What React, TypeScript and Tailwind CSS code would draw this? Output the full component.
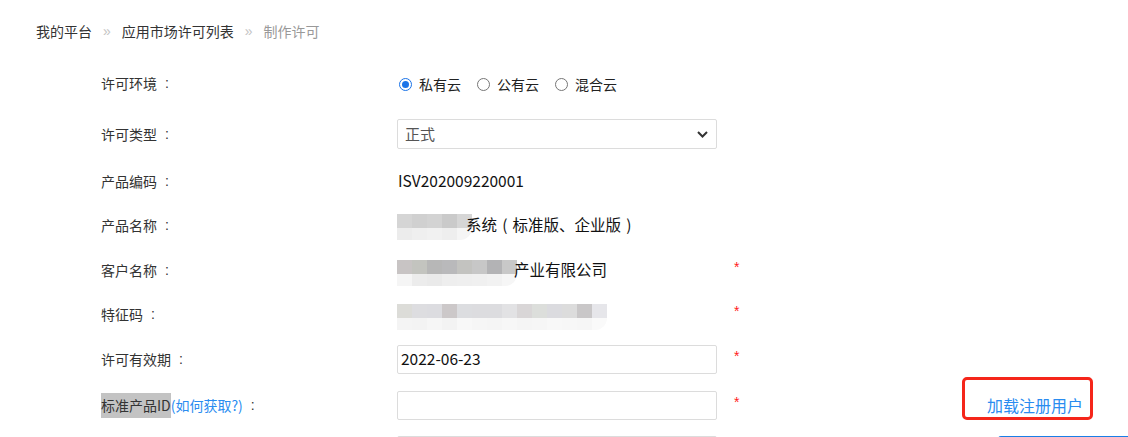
import React from "react";

const FONT = "font-['Noto_Sans_CJK_SC','Microsoft_YaHei',sans-serif]";

type Block = string;

function Mosaic({ top, bottom, className }: { top: Block[]; bottom: Block[]; className?: string }) {
  return (
    <div className={`flex flex-col ${className ?? ""}`}>
      <div className="flex">
        {top.map((c, i) => (
          <div key={i} className={`h-[14px] w-[15px] ${c}`} />
        ))}
      </div>
      <div className="flex overflow-hidden rounded-br-[12px]">
        {bottom.map((c, i) => (
          <div key={i} className={`h-[12px] w-[15px] ${c}`} />
        ))}
      </div>
    </div>
  );
}

function Radio({ checked, label }: { checked?: boolean; label: string }) {
  return (
    <label className="flex items-center">
      {checked ? (
        <span className="flex h-[13px] w-[13px] items-center justify-center rounded-full border-[1.5px] border-[#1a73e8] bg-white">
          <span className="h-[7px] w-[7px] rounded-full bg-[#1a73e8]" />
        </span>
      ) : (
        <span className="h-[13px] w-[13px] rounded-full border border-[#767676] bg-white" />
      )}
      <span className="ml-[7px] text-[14px] text-[#222]">{label}</span>
    </label>
  );
}

function Star() {
  return (
    <span className="ml-[17px] -mt-[6px] w-[10px] font-['Liberation_Sans',sans-serif] text-[14px] leading-none text-[#ff2020]">
      *
    </span>
  );
}

function Colon() {
  return <span className="ml-[8px] font-['Liberation_Sans',sans-serif]">:</span>;
}

function Row({
  label,
  children,
  star,
  mt,
  extra,
}: {
  label: React.ReactNode;
  children: React.ReactNode;
  star?: boolean;
  mt: string;
  extra?: React.ReactNode;
}) {
  return (
    <div className={`flex h-[30px] items-center ${mt}`}>
      <div className="flex w-[397px] items-center pl-[101px] text-[14px] text-[#333]">{label}</div>
      <div className="flex w-[320px] items-center">{children}</div>
      {star ? <Star /> : <span className="ml-[17px] w-[10px]" />}
      {extra}
    </div>
  );
}

function Sep() {
  return <span className="mx-[11px] font-['Liberation_Sans',sans-serif] text-[14px] text-[#c4c4c4]">»</span>;
}

export default function App() {
  return (
    <div className={`relative h-[437px] w-full overflow-hidden bg-white ${FONT}`}>
      {/* breadcrumb */}
      <div className="flex items-center pl-[36px] pt-[21px] text-[14px] leading-[20px]">
        <span className="text-[#333]">我的平台</span>
        <Sep />
        <span className="text-[#333]">应用市场许可列表</span>
        <Sep />
        <span className="text-[#999]">制作许可</span>
      </div>

      <div className="mt-[27px] flex flex-col">
        <Row label={<>许可环境<Colon /></>} mt="mt-0">
          <div className="flex items-center pl-[2px] pt-[2px]">
            <Radio checked label="私有云" />
            <span className="w-[16px]" />
            <Radio label="公有云" />
            <span className="w-[16px]" />
            <Radio label="混合云" />
          </div>
        </Row>

        <Row label={<>许可类型<Colon /></>} mt="mt-[21px]">
          <div className="flex h-[30px] w-[320px] items-center justify-between rounded-[2px] border border-[#dcdcdc] pl-[7px] pr-[8px] text-[15px] text-[#555]">
            <span>正式</span>
            <svg width="11" height="7" viewBox="0 0 11 7">
              <path d="M1 1l4.5 4.5L10 1" fill="none" stroke="#333" strokeWidth="2" />
            </svg>
          </div>
        </Row>

        <Row label={<>产品编码<Colon /></>} mt="mt-[17px]">
          <span className="pl-[1px] text-[15.5px] text-[#111]">ISV202009220001</span>
        </Row>

        <Row label={<>产品名称<Colon /></>} mt="mt-[14px]">
          <div className="flex items-center">
            <Mosaic
              className="mt-[4px]"
              top={["bg-[#d5d5d5]", "bg-[#d0d0d0]", "bg-[#d3d3d3]", "bg-[#cacaca]", "bg-[#d6d6d6]"]}
              bottom={["bg-[#ececec]", "bg-[#efefef]", "bg-[#f1f1f1]", "bg-[#eeeeee]", "bg-[#f5f5f5]"]}
            />
            <span className="-ml-[6px] flex items-center text-[15.5px] text-[#111]">
              <span>系统</span>
              <span className="inline-block w-[1em] text-center">(</span>
              <span>标准版、企业版</span>
              <span className="inline-block w-[1em] text-center">)</span>
            </span>
          </div>
        </Row>

        <Row label={<>客户名称<Colon /></>} mt="mt-[15px]" star>
          <div className="flex items-center">
            <Mosaic
              className="mt-[6px]"
              top={[
                "bg-[#c8c4c4]",
                "bg-[#c3c4bf]",
                "bg-[#b7b7b7]",
                "bg-[#b9b9bb]",
                "bg-[#c3c3c0]",
                "bg-[#c7c7c7]",
                "bg-[#b3b3b5]",
                "bg-[#c8c8c8]",
              ]}
              bottom={[
                "bg-[#f5f5f5]",
                "bg-[#ececec]",
                "bg-[#eaeaea]",
                "bg-[#eeeeee]",
                "bg-[#efefef]",
                "bg-[#f0f0f0]",
                "bg-[#f2f2f2]",
                "bg-[#f6f6f6]",
              ]}
            />
            <span className="-ml-[3px] text-[15.5px] text-[#111]">产业有限公司</span>
          </div>
        </Row>

        <Row label={<>特征码<Colon /></>} mt="mt-[14px]" star>
          <Mosaic
            className="mt-[6px]"
            top={[
              "bg-[#dcdcd8]",
              "bg-[#dddde0]",
              "bg-[#dcdce0]",
              "bg-[#ccc8c9]",
              "bg-[#dcdde0]",
              "bg-[#dcdcdf]",
              "bg-[#dcdcdf]",
              "bg-[#e2e2e4]",
              "bg-[#d9d6d7]",
              "bg-[#dcdedb]",
              "bg-[#dbdbdf]",
              "bg-[#dcdcdc]",
              "bg-[#c9c7c8]",
              "bg-[#e6e6ea]",
            ]}
            bottom={[
              "bg-[#f4f4f4]",
              "bg-[#f3f3f3]",
              "bg-[#f6f6f6]",
              "bg-[#f3f3f3]",
              "bg-[#f8f8f8]",
              "bg-[#f6f6f6]",
              "bg-[#f5f5f5]",
              "bg-[#f7f7f7]",
              "bg-[#f5f5f5]",
              "bg-[#f6f6f6]",
              "bg-[#f8f8f8]",
              "bg-[#f7f7f7]",
              "bg-[#f6f6f6]",
              "bg-[#fafafa]",
            ]}
          />
        </Row>

        <Row label={<>许可有效期<Colon /></>} mt="mt-[15px]" star>
          <div className="flex h-[29px] w-[320px] items-center rounded-[2px] border border-[#dcdcdc] pl-[3px] text-[15.5px] text-[#111]">
            2022-06-23
          </div>
        </Row>

        <Row
          label={
            <span className="flex items-center">
              <span className="bg-[#c3c3c3] leading-[25px]">标准产品ID</span>
              <span className="text-[#2a8cf0]">(如何获取?)</span>
              <Colon />
            </span>
          }
          mt="mt-[16px]"
          star
          extra={
            <div className="flex flex-1 justify-end pr-[45px]">
              <span className="relative text-[16px] leading-[20px] text-[#2a8cf0]">
                加载注册用户
                <span className="absolute -left-[25px] -right-[10px] -top-[18px] -bottom-[5px] rounded-[5px] border-[3px] border-[#f5261a]" />
              </span>
            </div>
          }
        >
          <div className="h-[29px] w-[320px] rounded-[2px] border border-[#dcdcdc]" />
        </Row>

        <div className="mt-[16px] flex h-[30px]">
          <div className="w-[397px]" />
          <div className="h-[30px] w-[320px] rounded-[2px] border border-[#dcdcdc]" />
          <div className="flex-1" />
          <div className="h-[30px] w-[130px] rounded-tl-[3px] border-l border-t-2 border-[#1a7fe6]" />
        </div>
      </div>
    </div>
  );
}
